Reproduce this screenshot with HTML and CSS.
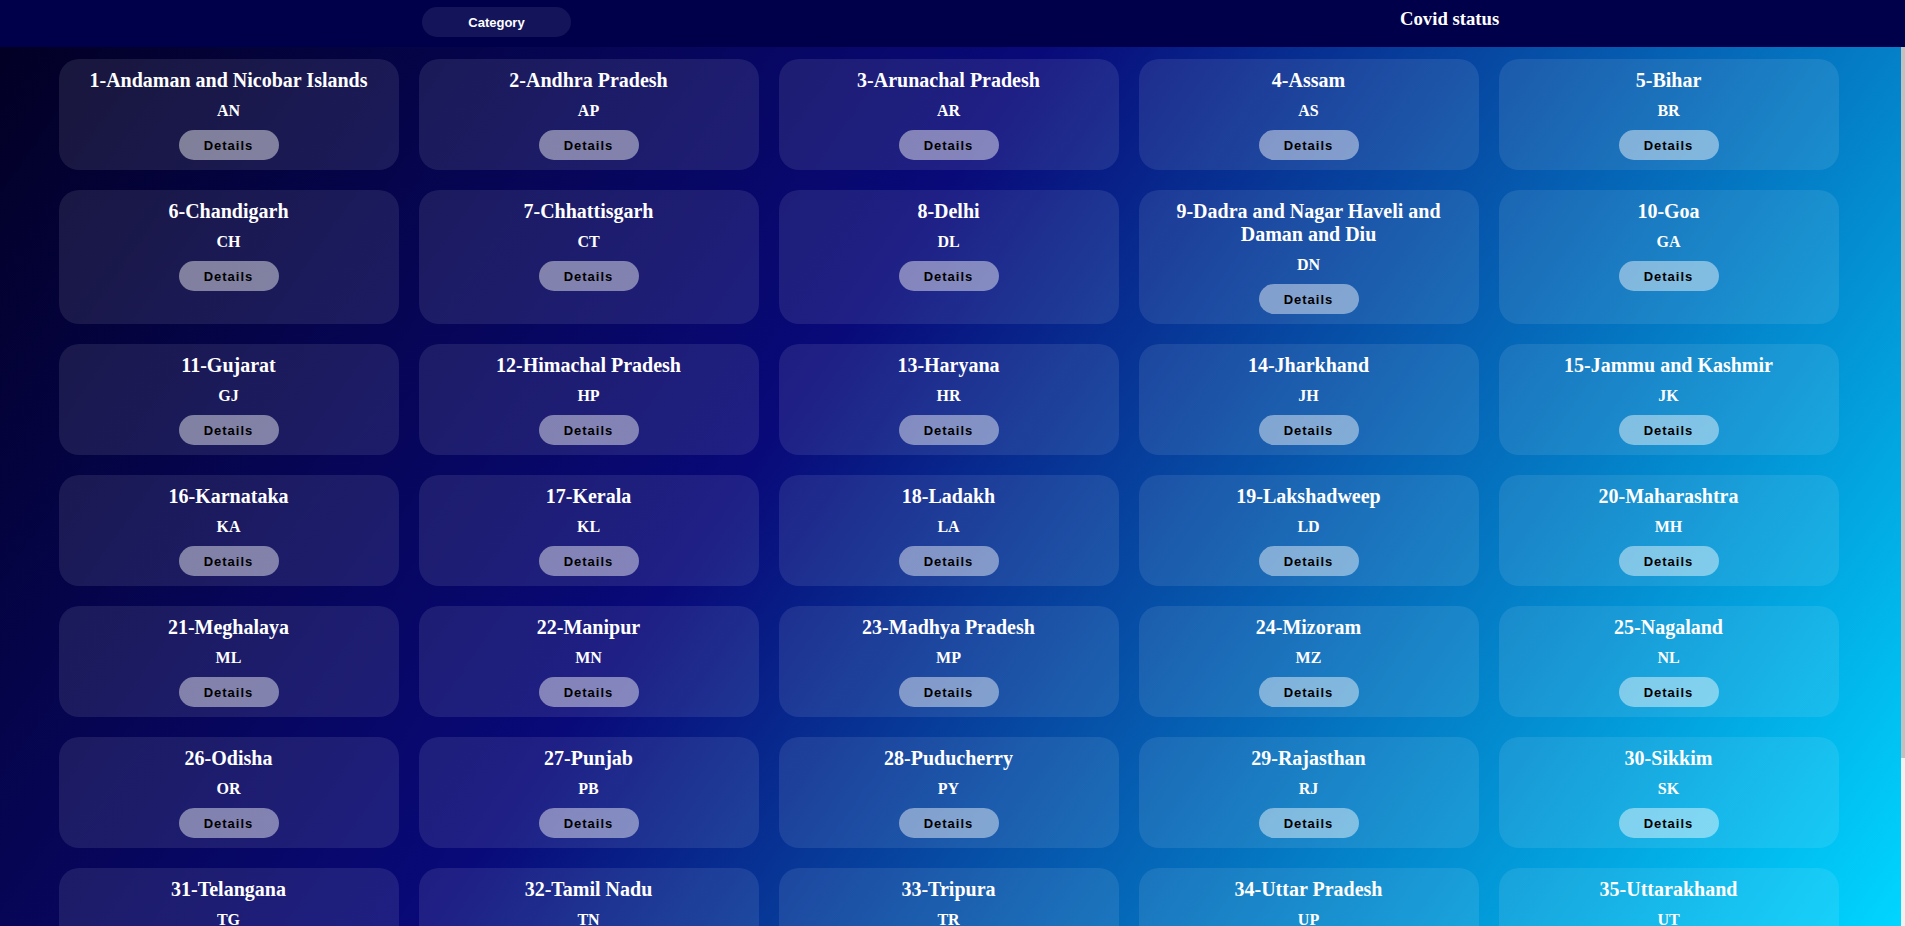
FILE: index.html
```html
<!DOCTYPE html>
<html lang="en">
<head>
<meta charset="utf-8">
<title>Covid status</title>
<link rel="stylesheet" href="styles.css">
</head>
<body>
<header class="topbar">
  <button class="category-btn">Category</button>
  <h3 class="brand">Covid status</h3>
</header>
<main class="content">
  <div class="grid">
    <div class="card"><h2 class="card-title">1-Andaman and Nicobar Islands</h2><p class="card-code">AN</p><button class="details-btn">Details</button></div>
    <div class="card"><h2 class="card-title">2-Andhra Pradesh</h2><p class="card-code">AP</p><button class="details-btn">Details</button></div>
    <div class="card"><h2 class="card-title">3-Arunachal Pradesh</h2><p class="card-code">AR</p><button class="details-btn">Details</button></div>
    <div class="card"><h2 class="card-title">4-Assam</h2><p class="card-code">AS</p><button class="details-btn">Details</button></div>
    <div class="card"><h2 class="card-title">5-Bihar</h2><p class="card-code">BR</p><button class="details-btn">Details</button></div>
    <div class="card"><h2 class="card-title">6-Chandigarh</h2><p class="card-code">CH</p><button class="details-btn">Details</button></div>
    <div class="card"><h2 class="card-title">7-Chhattisgarh</h2><p class="card-code">CT</p><button class="details-btn">Details</button></div>
    <div class="card"><h2 class="card-title">8-Delhi</h2><p class="card-code">DL</p><button class="details-btn">Details</button></div>
    <div class="card"><h2 class="card-title">9-Dadra and Nagar Haveli and Daman and Diu</h2><p class="card-code">DN</p><button class="details-btn">Details</button></div>
    <div class="card"><h2 class="card-title">10-Goa</h2><p class="card-code">GA</p><button class="details-btn">Details</button></div>
    <div class="card"><h2 class="card-title">11-Gujarat</h2><p class="card-code">GJ</p><button class="details-btn">Details</button></div>
    <div class="card"><h2 class="card-title">12-Himachal Pradesh</h2><p class="card-code">HP</p><button class="details-btn">Details</button></div>
    <div class="card"><h2 class="card-title">13-Haryana</h2><p class="card-code">HR</p><button class="details-btn">Details</button></div>
    <div class="card"><h2 class="card-title">14-Jharkhand</h2><p class="card-code">JH</p><button class="details-btn">Details</button></div>
    <div class="card"><h2 class="card-title">15-Jammu and Kashmir</h2><p class="card-code">JK</p><button class="details-btn">Details</button></div>
    <div class="card"><h2 class="card-title">16-Karnataka</h2><p class="card-code">KA</p><button class="details-btn">Details</button></div>
    <div class="card"><h2 class="card-title">17-Kerala</h2><p class="card-code">KL</p><button class="details-btn">Details</button></div>
    <div class="card"><h2 class="card-title">18-Ladakh</h2><p class="card-code">LA</p><button class="details-btn">Details</button></div>
    <div class="card"><h2 class="card-title">19-Lakshadweep</h2><p class="card-code">LD</p><button class="details-btn">Details</button></div>
    <div class="card"><h2 class="card-title">20-Maharashtra</h2><p class="card-code">MH</p><button class="details-btn">Details</button></div>
    <div class="card"><h2 class="card-title">21-Meghalaya</h2><p class="card-code">ML</p><button class="details-btn">Details</button></div>
    <div class="card"><h2 class="card-title">22-Manipur</h2><p class="card-code">MN</p><button class="details-btn">Details</button></div>
    <div class="card"><h2 class="card-title">23-Madhya Pradesh</h2><p class="card-code">MP</p><button class="details-btn">Details</button></div>
    <div class="card"><h2 class="card-title">24-Mizoram</h2><p class="card-code">MZ</p><button class="details-btn">Details</button></div>
    <div class="card"><h2 class="card-title">25-Nagaland</h2><p class="card-code">NL</p><button class="details-btn">Details</button></div>
    <div class="card"><h2 class="card-title">26-Odisha</h2><p class="card-code">OR</p><button class="details-btn">Details</button></div>
    <div class="card"><h2 class="card-title">27-Punjab</h2><p class="card-code">PB</p><button class="details-btn">Details</button></div>
    <div class="card"><h2 class="card-title">28-Puducherry</h2><p class="card-code">PY</p><button class="details-btn">Details</button></div>
    <div class="card"><h2 class="card-title">29-Rajasthan</h2><p class="card-code">RJ</p><button class="details-btn">Details</button></div>
    <div class="card"><h2 class="card-title">30-Sikkim</h2><p class="card-code">SK</p><button class="details-btn">Details</button></div>
    <div class="card"><h2 class="card-title">31-Telangana</h2><p class="card-code">TG</p><button class="details-btn">Details</button></div>
    <div class="card"><h2 class="card-title">32-Tamil Nadu</h2><p class="card-code">TN</p><button class="details-btn">Details</button></div>
    <div class="card"><h2 class="card-title">33-Tripura</h2><p class="card-code">TR</p><button class="details-btn">Details</button></div>
    <div class="card"><h2 class="card-title">34-Uttar Pradesh</h2><p class="card-code">UP</p><button class="details-btn">Details</button></div>
    <div class="card"><h2 class="card-title">35-Uttarakhand</h2><p class="card-code">UT</p><button class="details-btn">Details</button></div>
    <div class="card"><h2 class="card-title">36-West Bengal</h2><p class="card-code">WB</p><button class="details-btn">Details</button></div>
  </div>
</main>
<div class="scroll-track"><div class="scroll-thumb"></div></div>
</body>
</html>
```

FILE: styles.css
```css
* {
  box-sizing: border-box;
}

html, body {
  margin: 0;
  padding: 0;
  height: 100%;
  overflow: hidden;
}

body {
  font-family: "Liberation Serif", "Times New Roman", serif;
  display: flex;
  flex-direction: column;
  background: #000048;
}

.topbar {
  flex: 0 0 47px;
  height: 47px;
  background: #00004a;
  display: flex;
  align-items: flex-start;
  padding-left: 422px;
}

.category-btn {
  margin-top: 7px;
  width: 149px;
  height: 30px;
  border: none;
  border-radius: 15px;
  background: #14145a;
  color: #ffffff;
  font-family: "Liberation Sans", Arial, sans-serif;
  font-weight: bold;
  font-size: 13px;
  padding: 0;
}

.brand {
  margin: 8px 0 0 829px;
  font-size: 18.72px;
  font-weight: bold;
  color: #ffffff;
  line-height: normal;
}

.content {
  flex: 1 1 auto;
  overflow-y: auto;
  scrollbar-width: none;
}

.grid {
  display: grid;
  grid-template-columns: repeat(5, 340px);
  gap: 20px;
  justify-content: center;
  padding: 12px 8px 24px 0;
  background: linear-gradient(125deg, #020024 0%, #090979 39%, #00d4ff 94%);
}

.card {
  background: rgba(255, 255, 255, 0.09);
  border-radius: 20px;
  padding: 10px;
  display: flex;
  flex-direction: column;
  align-items: center;
  gap: 10px;
  color: #ffffff;
  text-align: center;
}

.card-title {
  margin: 0;
  font-size: 20px;
  font-weight: bold;
  line-height: 23px;
}

.card-code {
  margin: 0;
  font-size: 16px;
  font-weight: bold;
  line-height: 18px;
}

.details-btn {
  width: 100px;
  height: 30px;
  border: none;
  border-radius: 15px;
  background: rgba(255, 255, 255, 0.45);
  color: #000000;
  font-family: "Liberation Sans", Arial, sans-serif;
  font-weight: bold;
  font-size: 13px;
  letter-spacing: 1px;
  padding: 0;
}

.scroll-track {
  position: fixed;
  top: 47px;
  right: 0;
  bottom: 0;
  width: 4px;
  background: #f1f1f1;
}

.scroll-thumb {
  height: 711px;
  background: #c1c1c1;
}
```
